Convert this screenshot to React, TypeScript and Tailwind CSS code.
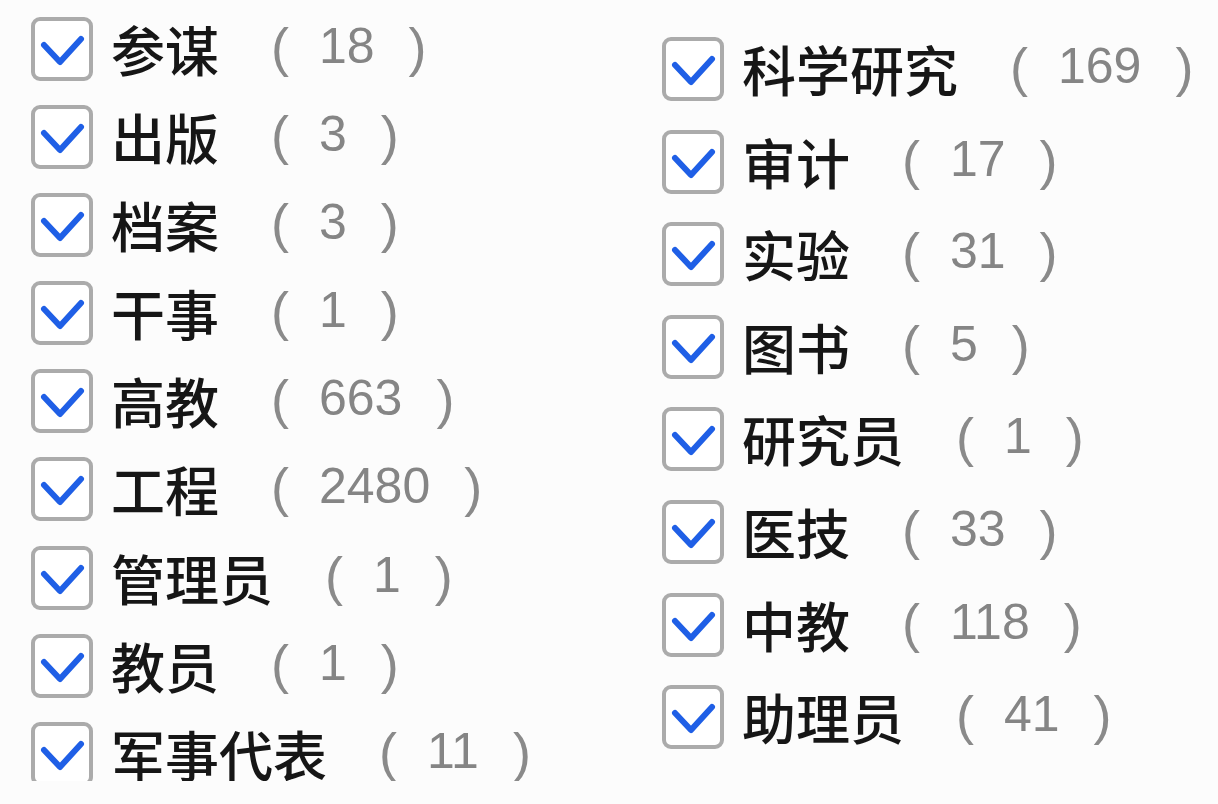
import React from "react";

type Item = { label: string; count: number };

const leftItems: Item[] = [
  { label: "参谋", count: 18 },
  { label: "出版", count: 3 },
  { label: "档案", count: 3 },
  { label: "干事", count: 1 },
  { label: "高教", count: 663 },
  { label: "工程", count: 2480 },
  { label: "管理员", count: 1 },
  { label: "教员", count: 1 },
  { label: "军事代表", count: 11 },
];

const rightItems: Item[] = [
  { label: "科学研究", count: 169 },
  { label: "审计", count: 17 },
  { label: "实验", count: 31 },
  { label: "图书", count: 5 },
  { label: "研究员", count: 1 },
  { label: "医技", count: 33 },
  { label: "中教", count: 118 },
  { label: "助理员", count: 41 },
];

function CheckBox() {
  return (
    <div className="w-[62px] h-[64px] shrink-0 rounded-[9px] border-[4px] border-[#ababab] bg-white">
      <svg viewBox="0 0 54 56" className="w-full h-full">
        <polyline
          points="9,24 25,41 46,18"
          fill="none"
          stroke="#1f5fe6"
          strokeWidth="6"
          strokeLinecap="round"
          strokeLinejoin="round"
        />
      </svg>
    </div>
  );
}

function Row({ item, rowClass }: { item: Item; rowClass: string }) {
  return (
    <div className={`flex items-start shrink-0 ${rowClass}`}>
      <CheckBox />
      <div className="flex items-center h-[64px] ml-[18px]">
        <span className="text-[54px] leading-none font-medium text-[#161616] [font-family:'Noto_Sans_CJK_SC',sans-serif]">
          {item.label}
        </span>
        <span className="ml-[52px] text-[54px] leading-none text-[#8a8a8a] [font-family:'Liberation_Sans',sans-serif] -mt-[4px]">
          (
        </span>
        <span className="ml-[30px] text-[50px] leading-none text-[#858585] [font-family:'Liberation_Sans',sans-serif] -mt-[6px]">
          {item.count}
        </span>
        <span className="ml-[34px] text-[54px] leading-none text-[#8a8a8a] [font-family:'Liberation_Sans',sans-serif] -mt-[4px]">
          )
        </span>
      </div>
    </div>
  );
}

export default function App() {
  return (
    <div className="w-[1218px] h-[804px] bg-[#fcfcfc] overflow-hidden">
      <div className="flex h-[781px] overflow-hidden">
        <div className="w-[662px] shrink-0 pl-[31px] pt-[17px] flex flex-col">
          {leftItems.map((it) => (
            <Row key={it.label} item={it} rowClass="h-[88.1px]" />
          ))}
        </div>
        <div className="pt-[37px] flex flex-col">
          {rightItems.map((it) => (
            <Row key={it.label} item={it} rowClass="h-[92.6px]" />
          ))}
        </div>
      </div>
    </div>
  );
}
